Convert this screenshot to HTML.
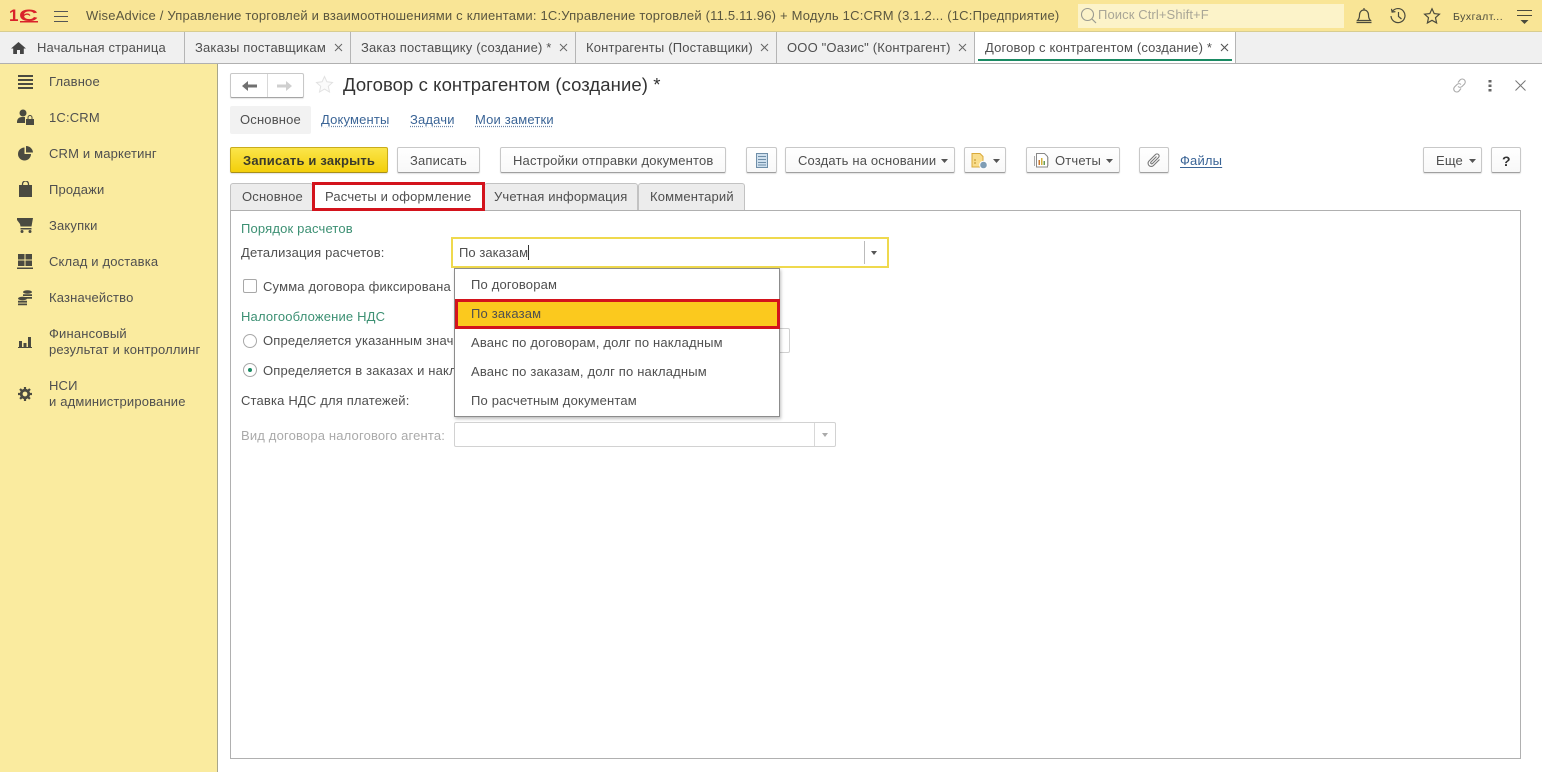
<!DOCTYPE html>
<html lang="ru"><head><meta charset="utf-8"><title>Договор с контрагентом</title>
<style>
html,body{margin:0;padding:0;width:1542px;height:772px;overflow:hidden;background:#fff}
body{position:relative;font-family:"Liberation Sans",Arial,sans-serif;font-size:13px;letter-spacing:.17px;color:#4f4f4f}
.a,.t,.b,svg.i{position:absolute}
.t{white-space:nowrap;line-height:16px}
.b{box-sizing:border-box;background:linear-gradient(#fff,#f8f8f8);border:1px solid #c8c8c8;border-bottom:1px solid #a0a0a0;border-radius:2px;box-shadow:0 1px 1px rgba(0,0,0,.12);height:26px;top:147px}
.tab{position:absolute;top:32px;height:31px;box-sizing:border-box;border-right:1px solid #b5b5b5}
.ft{position:absolute;top:183px;height:27px;box-sizing:border-box;background:#ececec;border:1px solid #c2c2c2;border-bottom:0;border-radius:3px 3px 0 0}
.lnk{color:#3a6496;text-decoration:underline dotted #6a84a8;text-underline-offset:2px}
</style></head><body>
<!-- top bar -->
<div class="a" style="left:0;top:0;width:1542px;height:32px;background:#f9e596;border-bottom:1px solid #d8cd90;box-sizing:border-box"></div>
<div class="t" style="left:9px;top:6px;color:#d9222a;font-weight:bold;font-size:17px;line-height:20px;letter-spacing:0">1<span style="display:inline-block;transform:scale(1.55,1);transform-origin:0 50%;margin-left:1px">С</span></div>
<svg class="i" style="left:9px;top:8px" width="30" height="16" viewBox="0 0 30 16"><path d="M11 13.700H29" stroke="#d9222a" stroke-width="1.500" fill="none"/><path d="M14 10.500a4 4 0 0 1 7-3" stroke="#d9222a" stroke-width="1.300" fill="none"/></svg>
<svg class="i" style="left:53px;top:10px" width="16" height="13" viewBox="0 0 16 13"><path d="M1 1.500h14M1 6.500h14M1 11.500h14" stroke="#555" stroke-width="1.100"/></svg>
<div class="t" style="left:86px;top:8px;letter-spacing:.2px;color:#5a563f">WiseAdvice / Управление торговлей и взаимоотношениями с клиентами: 1С:Управление торговлей (11.5.11.96) + Модуль 1С:CRM (3.1.2... (1С:Предприятие)</div>
<div class="a" style="left:1078px;top:4px;width:266px;height:24px;background:#fcf3c9"></div>
<svg class="i" style="left:1080px;top:7px" width="17" height="18" viewBox="0 0 17 18"><circle cx="7.500" cy="7.500" r="6" fill="none" stroke="#9a9a90" stroke-width="1.100"/><path d="M12 12l4 4" stroke="#9a9a90" stroke-width="1.200"/></svg>
<div class="t" style="left:1098px;top:7px;color:#a9a697;letter-spacing:.1px">Поиск Ctrl+Shift+F</div>
<svg class="i" style="left:1355px;top:7px" width="18" height="18" viewBox="0 0 18 18"><path d="M2.500 13.500c1.500-1.500 2-3 2-5.500 0-3 2-5 4.500-5s4.500 2 4.500 5c0 2.500.5 4 2 5.500zM1.500 15.500h15M9 1v2" fill="none" stroke="#4a4a3c" stroke-width="1.200"/></svg>
<svg class="i" style="left:1389px;top:7px" width="18" height="18" viewBox="0 0 18 18"><path d="M3.300 4.500A7 7 0 1 1 2 9M2.500 1.800l.6 3.300 3.300-.5M9.500 5v4.500l3 2.500" fill="none" stroke="#4a4a3c" stroke-width="1.200"/></svg>
<svg class="i" style="left:1423px;top:7px" width="18" height="18" viewBox="0 0 18 18"><path d="M9 1.800l2.200 4.800 5.200.6-3.900 3.500 1.100 5.200L9 13.300 4.400 15.900l1.100-5.200L1.600 7.200l5.200-.6z" fill="none" stroke="#4a4a3c" stroke-width="1.200"/></svg>
<div class="t" style="left:1453px;top:9px;font-size:10.500px;letter-spacing:.5px;color:#4a4a3c">Бухгалт...</div>
<svg class="i" style="left:1516px;top:9px" width="17" height="16" viewBox="0 0 17 16"><path d="M1 1.500h15M1 6.500h15" stroke="#4a4a3c" stroke-width="1.100"/><path d="M4.500 11h8L8.500 15z" fill="#4a4a3c"/></svg>

<!-- tabs strip -->
<div class="a" style="left:0;top:32px;width:1542px;height:32px;background:#f0f0f0;border-bottom:1px solid #b0b0b0;box-sizing:border-box"></div>
<div class="tab" style="left:0;width:185px"></div>
<div class="tab" style="left:185px;width:166px"></div>
<div class="tab" style="left:351px;width:225px"></div>
<div class="tab" style="left:576px;width:201px"></div>
<div class="tab" style="left:777px;width:198px"></div>
<div class="a" style="left:975px;top:32px;width:261px;height:31px;background:#fff;border-right:1px solid #b5b5b5;box-sizing:border-box"></div>
<div class="a" style="left:978px;top:59px;width:254px;height:2px;background:#1a8a63"></div>
<svg class="i" style="left:11px;top:41px" width="15" height="14" viewBox="0 0 15 14"><path d="M7.500 1L0 7.500h2.200V13h3.800V9h3v4h3.800V7.500H15z" fill="#444"/></svg>
<div class="t" style="left:37px;top:40px">Начальная страница</div>
<div class="t" style="left:195px;top:40px">Заказы поставщикам</div>
<div class="t" style="left:361px;top:40px">Заказ поставщику (создание) *</div>
<div class="t" style="left:586px;top:40px">Контрагенты (Поставщики)</div>
<div class="t" style="left:787px;top:40px">ООО "Оазис" (Контрагент)</div>
<div class="t" style="left:985px;top:40px">Договор с контрагентом (создание) *</div>
<svg class="i" style="left:334px;top:43px" width="9" height="9"><path d="M1 1l7 7M8 1L1 8" stroke="#666" stroke-width="1"/></svg>
<svg class="i" style="left:559px;top:43px" width="9" height="9"><path d="M1 1l7 7M8 1L1 8" stroke="#666" stroke-width="1"/></svg>
<svg class="i" style="left:760px;top:43px" width="9" height="9"><path d="M1 1l7 7M8 1L1 8" stroke="#666" stroke-width="1"/></svg>
<svg class="i" style="left:958px;top:43px" width="9" height="9"><path d="M1 1l7 7M8 1L1 8" stroke="#666" stroke-width="1"/></svg>
<svg class="i" style="left:1220px;top:43px" width="9" height="9"><path d="M1 1l7 7M8 1L1 8" stroke="#555" stroke-width="1.100"/></svg>

<!-- sidebar -->
<div class="a" style="left:0;top:64px;width:218px;height:708px;background:#faeb9f;border-right:1px solid #a8a68a;box-sizing:border-box"></div>
<svg class="i" style="left:18px;top:75px" width="15" height="14"><path d="M0 0h15v2H0zM0 4h15v2H0zM0 8h15v2H0zM0 12h15v2H0z" fill="#4a4a40"/></svg>
<div class="t" style="left:49px;top:74px">Главное</div>
<svg class="i" style="left:17px;top:109px" width="17" height="17" viewBox="0 0 17 17"><circle cx="6" cy="4" r="3.500" fill="#4a4a40"/><path d="M0 13c0-3 2-5 5-5h3v6H0z" fill="#4a4a40"/><path d="M9 10h8v6H9z" fill="#4a4a40"/><path d="M11 10V8.500a2 2 0 0 1 4 0V10" fill="none" stroke="#4a4a40"/></svg>
<div class="t" style="left:49px;top:110px">1С:CRM</div>
<svg class="i" style="left:18px;top:146px" width="15" height="15" viewBox="0 0 15 15"><path d="M6.500 1.500A6.500 6.500 0 1 0 13 8H6.500z" fill="#4a4a40"/><path d="M8 0a7 7 0 0 1 7 6.500H8z" fill="#4a4a40"/></svg>
<div class="t" style="left:49px;top:146px">CRM и маркетинг</div>
<svg class="i" style="left:19px;top:181px" width="13" height="16" viewBox="0 0 13 16"><path d="M0 4h13v12H0z" fill="#4a4a40"/><path d="M3.500 6V3a3 3 0 0 1 6 0v3" fill="none" stroke="#4a4a40" stroke-width="1.300"/></svg>
<div class="t" style="left:49px;top:182px">Продажи</div>
<svg class="i" style="left:17px;top:218px" width="16" height="15" viewBox="0 0 16 15"><path d="M0 0h16l-1.500 8.500H3.500L3 6 0 2z" fill="#4a4a40"/><path d="M3.500 10h11v1.500h-11z" fill="#4a4a40"/><circle cx="5" cy="13.500" r="1.500" fill="#4a4a40"/><circle cx="13" cy="13.500" r="1.500" fill="#4a4a40"/></svg>
<div class="t" style="left:49px;top:218px">Закупки</div>
<svg class="i" style="left:17px;top:254px" width="16" height="15" viewBox="0 0 16 15"><path d="M1 0h6.500v5.500H1zM8.500 0H15v5.500H8.500zM1 6.500h6.500V12H1zM8.500 6.500H15V12H8.500zM0 13.500h16V15H0z" fill="#4a4a40"/></svg>
<div class="t" style="left:49px;top:254px">Склад и доставка</div>
<svg class="i" style="left:18px;top:290px" width="14" height="16" viewBox="0 0 14 16"><ellipse cx="9.500" cy="2" rx="4.500" ry="1.800" fill="#4a4a40"/><path d="M5 4.200h9v1.800H5zM5 7h9v1.800H5z" fill="#4a4a40"/><ellipse cx="4.500" cy="8.500" rx="4.500" ry="1.800" fill="#4a4a40"/><path d="M0 10.800h9v1.800H0zM0 13.500h9v1.800H0z" fill="#4a4a40"/></svg>
<div class="t" style="left:49px;top:290px">Казначейство</div>
<svg class="i" style="left:18px;top:336px" width="14" height="12"><path d="M1 5h3v7H1zM5.500 7h3v5h-3zM10 1h3v11h-3z" fill="#4a4a40"/><path d="M0 11h14v1H0z" fill="#4a4a40"/></svg>
<div class="t" style="left:49px;top:326px">Финансовый</div>
<div class="t" style="left:49px;top:342px">результат и контроллинг</div>
<svg class="i" style="left:18px;top:387px" width="14" height="14" viewBox="0 0 14 14"><circle cx="7" cy="7" r="3.800" fill="none" stroke="#4a4a40" stroke-width="2.800"/><path d="M7 0v14M0 7h14M2 2l10 10M12 2L2 12" stroke="#4a4a40" stroke-width="2.200" stroke-dasharray="2.400 9.200"/></svg>
<div class="t" style="left:49px;top:378px">НСИ</div>
<div class="t" style="left:49px;top:394px">и администрирование</div>

<!-- header -->
<div class="a" style="left:230px;top:73px;width:74px;height:25px;box-sizing:border-box;border:1px solid #c8c8c8;border-bottom-color:#a5a5a5;border-radius:2px;background:#fff;box-shadow:0 1px 1px rgba(0,0,0,.1)"></div>
<div class="a" style="left:267px;top:74px;width:1px;height:23px;background:#d8d8d8"></div>
<svg class="i" style="left:242px;top:81px" width="15" height="10"><path d="M0 5L6 0v3.500h9v3H6V10z" fill="#707070"/></svg>
<svg class="i" style="left:277px;top:81px" width="15" height="10"><path d="M15 5L9 0v3.500H0v3h9V10z" fill="#cfcfcf"/></svg>
<svg class="i" style="left:315px;top:75px" width="19" height="19" viewBox="0 0 19 19"><path d="M9.500 1.500l2.400 5.300 5.600.7-4.200 3.800 1.200 5.700-5-2.900-5 2.900 1.200-5.700L1.500 7.500l5.600-.7z" fill="#fbfbfb" stroke="#e2e2e2"/></svg>
<div class="t" style="left:343px;top:73px;font-size:18.500px;letter-spacing:.08px;line-height:24px;color:#333">Договор с контрагентом (создание) *</div>
<svg class="i" style="left:1451px;top:77px" width="17" height="17" viewBox="0 0 17 17"><path d="M7 5.500l2-2.500a3 3 0 0 1 4.500 4l-2.500 2.500a3 3 0 0 1-4 0M10 11.500l-2 2.500a3 3 0 0 1-4.500-4L6 7.500a3 3 0 0 1 4 0" fill="none" stroke="#aaa" stroke-width="1.100"/></svg>
<svg class="i" style="left:1488px;top:80px" width="4" height="12"><path d="M.5 0h3v2.500h-3zM.5 4.500h3V7h-3zM.5 9h3v2.500h-3z" fill="#666"/></svg>
<svg class="i" style="left:1515px;top:80px" width="11" height="11"><path d="M.5.500l10 10M10.500.500l-10 10" stroke="#777" stroke-width="1"/></svg>

<!-- subnav -->
<div class="a" style="left:230px;top:106px;width:81px;height:28px;background:#f2f2f2;border-radius:2px"></div>
<div class="t" style="left:240px;top:112px">Основное</div>
<div class="t" style="left:321px;top:112px"><span class="lnk">Документы</span></div>
<div class="t" style="left:410px;top:112px"><span class="lnk">Задачи</span></div>
<div class="t" style="left:475px;top:112px"><span class="lnk">Мои заметки</span></div>

<!-- command bar -->
<div class="b" style="left:230px;width:158px;background:linear-gradient(#fbe54a,#f3cf0a);border-color:#c9ac1c #c9ac1c #a88f18"></div>
<div class="t" style="left:243px;top:153px;color:#3a3a2a;font-weight:bold;letter-spacing:.18px">Записать и закрыть</div>
<div class="b" style="left:397px;width:83px"></div><div class="t" style="left:410px;top:153px">Записать</div>
<div class="b" style="left:500px;width:226px"></div><div class="t" style="left:513px;top:153px">Настройки отправки документов</div>
<div class="b" style="left:746px;width:31px"></div>
<svg class="i" style="left:756px;top:153px" width="12" height="15"><path d="M.5.500h11v14H.5z" fill="#cfe0ee" stroke="#6f8ea8"/><path d="M2 3.500h8M2 6.500h8M2 9.500h8M2 12h8" stroke="#6f8ea8"/></svg>
<div class="b" style="left:785px;width:170px"></div><div class="t" style="left:798px;top:153px">Создать на основании</div>
<svg class="i" style="left:941px;top:159px" width="7" height="4"><path d="M0 0h7L3.500 4z" fill="#555"/></svg>
<div class="b" style="left:964px;width:42px"></div>
<svg class="i" style="left:971px;top:153px" width="18" height="17" viewBox="0 0 18 17"><path d="M1 .5h8l3 3V14H1z" fill="#f9dd8c" stroke="#d9a93a"/><circle cx="12.500" cy="12" r="3.800" fill="#7f9db5" stroke="#fff"/><path d="M3 7h2M3 10h2" stroke="#b98a20"/></svg>
<svg class="i" style="left:993px;top:159px" width="7" height="4"><path d="M0 0h7L3.500 4z" fill="#555"/></svg>
<div class="b" style="left:1026px;width:94px"></div>
<svg class="i" style="left:1033px;top:153px" width="17" height="16" viewBox="0 0 17 16"><path d="M3.500.5h8l3 3V14h-11z" fill="#fff" stroke="#888"/><path d="M15 4v9M1.500 3v10" stroke="#aaa"/><path d="M5.500 7h1.500v5H5.500z" fill="#c9772e"/><path d="M8 5h1.500v7H8z" fill="#d2b03a"/><path d="M10.500 8H12v4h-1.500z" fill="#6a9a50"/></svg>
<div class="t" style="left:1055px;top:153px">Отчеты</div>
<svg class="i" style="left:1106px;top:159px" width="7" height="4"><path d="M0 0h7L3.500 4z" fill="#555"/></svg>
<div class="b" style="left:1139px;width:30px"></div>
<svg class="i" style="left:1146px;top:152px" width="16" height="16" viewBox="0 0 16 16"><path d="M13.500 7.500l-6 6a3 3 0 0 1-4.500-4.500l6.500-6.500a2 2 0 0 1 3 3L6.500 11.500a1 1 0 0 1-1.500-1.500l5.500-5.500" fill="none" stroke="#777" stroke-width="1.100"/></svg>
<div class="t" style="left:1180px;top:153px;color:#3a6496;text-decoration:underline;text-underline-offset:2px">Файлы</div>
<div class="b" style="left:1423px;width:59px"></div><div class="t" style="left:1436px;top:153px">Еще</div>
<svg class="i" style="left:1469px;top:159px" width="7" height="4"><path d="M0 0h7L3.500 4z" fill="#555"/></svg>
<div class="b" style="left:1491px;width:30px"></div><div class="t" style="left:1502px;top:153px;font-weight:bold;font-size:14px;color:#333">?</div>

<!-- panel -->
<div class="a" style="left:230px;top:210px;width:1291px;height:549px;box-sizing:border-box;border:1px solid #b0b0b0;background:#fff"></div>
<div class="ft" style="left:230px;width:83px"></div>
<div class="ft" style="left:484px;width:154px"></div>
<div class="ft" style="left:638px;width:107px"></div>
<div class="a" style="left:312px;top:182px;width:173px;height:29px;box-sizing:border-box;border:3px solid #d3131c;background:#fff"></div>
<div class="t" style="left:242px;top:189px">Основное</div>
<div class="t" style="left:325px;top:189px">Расчеты и оформление</div>
<div class="t" style="left:494px;top:189px">Учетная информация</div>
<div class="t" style="left:650px;top:189px">Комментарий</div>

<!-- form -->
<div class="t" style="left:241px;top:221px;color:#3c9073">Порядок расчетов</div>
<div class="t" style="left:241px;top:245px">Детализация расчетов:</div>
<div class="a" style="left:451px;top:237px;width:438px;height:31px;box-sizing:border-box;border:2px solid #efd94e;background:#fff"></div>
<div class="t" style="left:459px;top:245px;letter-spacing:.05px">По заказам</div>
<div class="a" style="left:528px;top:245px;width:1px;height:15px;background:#333"></div>
<div class="a" style="left:864px;top:241px;width:1px;height:23px;background:#bbb"></div>
<svg class="i" style="left:871px;top:251px" width="6" height="4"><path d="M0 0h6L3 4z" fill="#555"/></svg>

<div class="a" style="left:243px;top:279px;width:14px;height:14px;box-sizing:border-box;border:1px solid #a8a8a8;border-radius:2px;background:#fff"></div>
<div class="t" style="left:263px;top:279px">Сумма договора фиксирована</div>
<div class="t" style="left:241px;top:309px;color:#3c9073">Налогообложение НДС</div>
<div class="a" style="left:243px;top:334px;width:14px;height:14px;box-sizing:border-box;border:1px solid #a8a8a8;border-radius:50%;background:#fff"></div>
<div class="t" style="left:263px;top:333px">Определяется указанным значением</div>
<div class="a" style="left:243px;top:363px;width:14px;height:14px;box-sizing:border-box;border:1px solid #a8a8a8;border-radius:50%;background:#fff"></div>
<div class="a" style="left:248px;top:368px;width:4px;height:4px;border-radius:50%;background:#1a8a63"></div>
<div class="t" style="left:263px;top:363px">Определяется в заказах и накладных</div>
<div class="a" style="left:770px;top:328px;width:20px;height:25px;box-sizing:border-box;border:1px solid #d0d0d0;border-radius:2px;background:#fff"></div>
<div class="t" style="left:241px;top:393px">Ставка НДС для платежей:</div>
<div class="t" style="left:241px;top:428px;color:#aaa">Вид договора налогового агента:</div>
<div class="a" style="left:454px;top:422px;width:382px;height:25px;box-sizing:border-box;border:1px solid #d2d2d2;border-radius:2px;background:#fff"></div>
<div class="a" style="left:814px;top:423px;width:1px;height:23px;background:#d8d8d8"></div>
<svg class="i" style="left:822px;top:433px" width="6" height="4"><path d="M0 0h6L3 4z" fill="#aaa"/></svg>

<!-- dropdown -->
<div class="a" style="left:454px;top:268px;width:326px;height:149px;box-sizing:border-box;border:1px solid #8c8c8c;background:#fff;box-shadow:1px 2px 3px rgba(0,0,0,.25)"></div>
<div class="t" style="left:471px;top:277px">По договорам</div>
<div class="a" style="left:455px;top:299px;width:325px;height:30px;box-sizing:border-box;border:3px solid #d3131c;background:#fbc91e"></div>
<div class="t" style="left:471px;top:306px">По заказам</div>
<div class="t" style="left:471px;top:335px">Аванс по договорам, долг по накладным</div>
<div class="t" style="left:471px;top:364px">Аванс по заказам, долг по накладным</div>
<div class="t" style="left:471px;top:393px">По расчетным документам</div>
</body></html>
